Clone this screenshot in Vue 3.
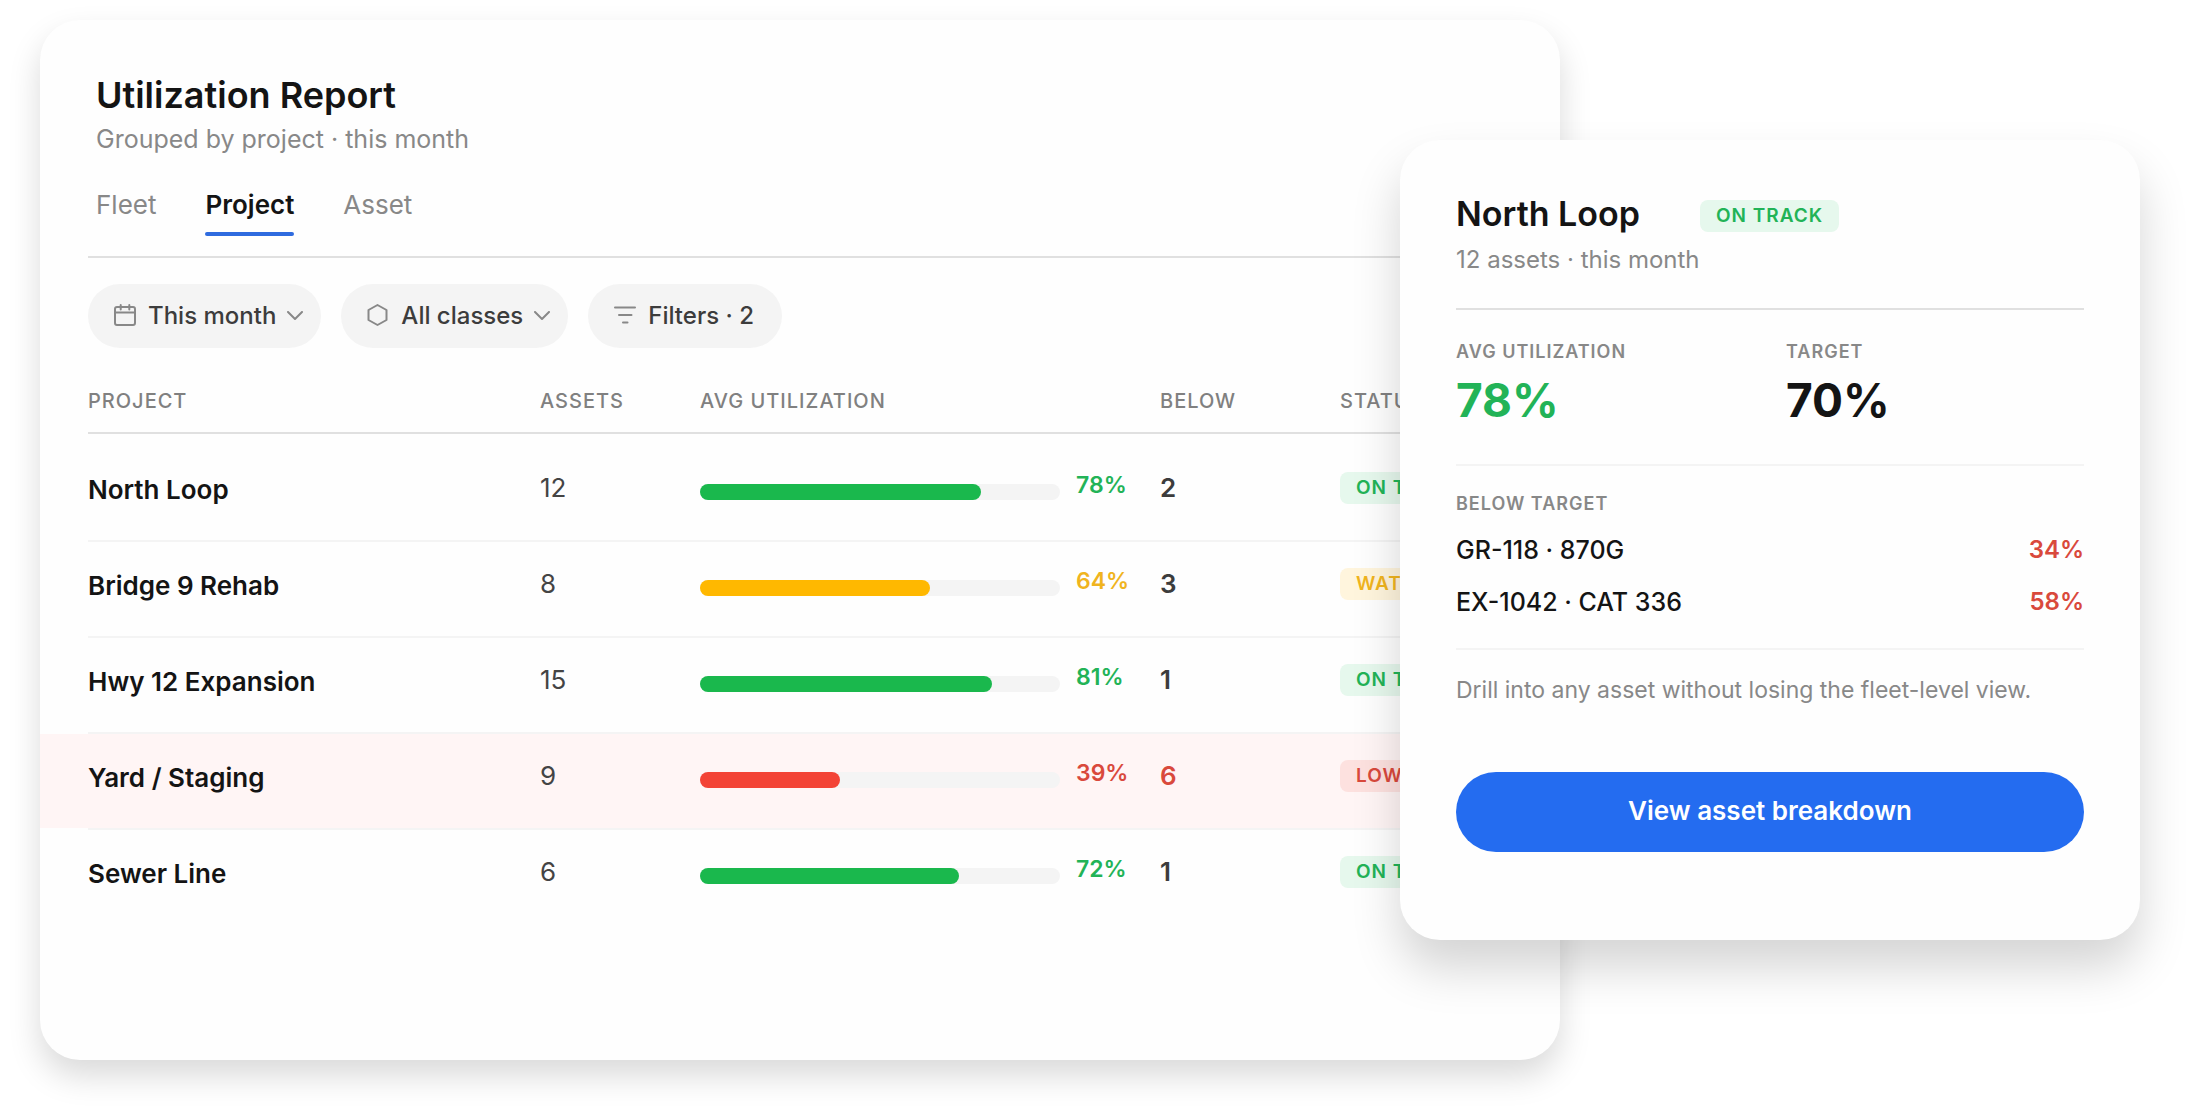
<script setup>
import { ref } from 'vue'

const tabs = ['Fleet', 'Project', 'Asset']
const activeTab = ref('Project')

const projects = [
  { name: 'North Loop', assets: 12, pct: 78, below: 2, status: 'On track', tone: 'good' },
  { name: 'Bridge 9 Rehab', assets: 8, pct: 64, below: 3, status: 'Watch', tone: 'warn' },
  { name: 'Hwy 12 Expansion', assets: 15, pct: 81, below: 1, status: 'On track', tone: 'good' },
  { name: 'Yard / Staging', assets: 9, pct: 39, below: 6, status: 'Low', tone: 'bad' },
  { name: 'Sewer Line', assets: 6, pct: 72, below: 1, status: 'On track', tone: 'good' }
]

const belowTarget = [
  { name: 'GR-118 · 870G', pct: 34 },
  { name: 'EX-1042 · CAT 336', pct: 58 }
]
</script>

<template>
  <main class="stage">
    <section class="card report">
      <header class="report-head">
        <h1>Utilization Report</h1>
        <p class="sub">Grouped by project · this month</p>
        <div class="tabs" role="tablist">
          <button
            v-for="tab in tabs"
            :key="tab"
            type="button"
            role="tab"
            class="tab"
            :class="{ active: tab === activeTab }"
            :aria-selected="tab === activeTab"
            @click="activeTab = tab"
          >{{ tab }}</button>
        </div>
      </header>

      <div class="chips">
        <button type="button" class="chip">
          <svg class="icon" viewBox="0 0 24 24" aria-hidden="true">
            <rect x="2" y="3" width="20" height="18" rx="2" />
            <path d="M2 8.500H22M7.700 1V5.500M16.300 1V5.500" />
          </svg>
          <span>This month</span>
          <svg class="chevron" viewBox="0 0 16 10" aria-hidden="true"><path d="M1 1L8 8L15 1" /></svg>
        </button>
        <button type="button" class="chip">
          <svg class="icon" viewBox="0 0 24 24" aria-hidden="true">
            <path d="M11.500 1L20.500 6V16L11.500 21L2.500 16V6Z" />
          </svg>
          <span>All classes</span>
          <svg class="chevron" viewBox="0 0 16 10" aria-hidden="true"><path d="M1 1L8 8L15 1" /></svg>
        </button>
        <button type="button" class="chip">
          <svg class="icon" viewBox="0 0 24 24" aria-hidden="true">
            <path d="M2 3.500H22M6 11H18.500M10 18.500H14.500" />
          </svg>
          <span>Filters · 2</span>
        </button>
      </div>

      <table class="table">
        <colgroup>
          <col class="c-project"><col class="c-assets"><col class="c-util"><col class="c-below"><col class="c-status">
        </colgroup>
        <thead>
          <tr>
            <th scope="col">Project</th>
            <th scope="col">Assets</th>
            <th scope="col">Avg utilization</th>
            <th scope="col">Below</th>
            <th scope="col">Status</th>
          </tr>
        </thead>
        <tbody>
          <tr v-for="p in projects" :key="p.name" :class="[p.tone]">
            <td class="name">{{ p.name }}</td>
            <td class="assets">{{ p.assets }}</td>
            <td class="util">
              <div class="meter">
                <div class="track"><div class="fill" :style="{ width: p.pct + '%' }"></div></div>
                <span class="pct">{{ p.pct }}%</span>
              </div>
            </td>
            <td class="below">{{ p.below }}</td>
            <td class="status"><span class="badge" :class="p.tone">{{ p.status }}</span></td>
          </tr>
        </tbody>
      </table>
    </section>

    <aside class="card detail">
      <header class="detail-head">
        <div class="detail-title">
          <h2>North Loop</h2>
          <span class="badge good">On track</span>
        </div>
        <p class="sub">12 assets · this month</p>
      </header>

      <dl class="stats">
        <div>
          <dt class="label">Avg utilization</dt>
          <dd class="good">78%</dd>
        </div>
        <div>
          <dt class="label">Target</dt>
          <dd>70%</dd>
        </div>
      </dl>

      <section class="shortfall">
        <h3 class="label">Below target</h3>
        <ul>
          <li v-for="a in belowTarget" :key="a.name">
            <span>{{ a.name }}</span><strong>{{ a.pct }}%</strong>
          </li>
        </ul>
      </section>

      <p class="hint">Drill into any asset without losing the fleet-level view.</p>
      <button type="button" class="cta">View asset breakdown</button>
    </aside>
  </main>
</template>

<style>
body {
  background: #fff;
}
</style>

<style scoped>
.stage {
  display: flex;
  align-items: flex-start;
  box-sizing: border-box;
  padding: 20px 55px 59px 40px;
  overflow: hidden;
  font-family: Inter, "Liberation Sans", sans-serif;
  font-size: 26px;
  line-height: 32px;
  color: #141414;
}

h1, h2, h3, p, ul, dl, dd {
  margin: 0;
  padding: 0;
}

button {
  border: 0;
  padding: 0;
  background: none;
  font: inherit;
  color: inherit;
  cursor: pointer;
}

.card {
  box-sizing: border-box;
  background: #fefefe;
  border-radius: 40px;
}

.report {
  flex: 1 1 0;
  min-width: 0;
  padding: 52px 48px 134px;
  box-shadow: 0 16px 32px rgba(0, 0, 0, 0.15);
}

.report-head {
  padding: 0 8px 20px;
  border-bottom: 2px solid #e0e0e0;
}

h1 {
  font-size: 36px;
  line-height: 46px;
  font-weight: 600;
}

.sub {
  font-size: 24px;
  color: #888;
}

.report-head .sub {
  margin-top: 5px;
  font-size: 25px;
}

.tabs {
  display: flex;
  gap: 49px;
  margin-top: 34px;
}

.tab {
  position: relative;
  padding-bottom: 15px;
  color: #888;
}

.tab.active {
  font-weight: 600;
  color: #141414;
}

.tab.active::after {
  content: "";
  position: absolute;
  left: 0;
  right: 0;
  bottom: 0;
  height: 4px;
  border-radius: 2px;
  background: #2f6bdf;
}

.chips {
  display: flex;
  gap: 20px;
  margin-top: 26px;
}

.chip {
  display: flex;
  align-items: center;
  height: 64px;
  padding: 0 18px 0 25px;
  border-radius: 32px;
  background: #f4f4f4;
  font-size: 24px;
  font-weight: 500;
  color: #3c3c3c;
}

.chip:last-child {
  padding-right: 28px;
}

.icon {
  width: 24px;
  height: 24px;
  margin-right: 11px;
}

.chevron {
  width: 16px;
  height: 10px;
  margin-left: 11px;
}

.icon,
.chevron {
  fill: none;
  stroke: #888;
  stroke-width: 2;
  stroke-linecap: round;
  stroke-linejoin: round;
}

.table {
  width: 100%;
  margin-top: 41px;
  table-layout: fixed;
  border-spacing: 0;
}

.c-project { width: 452px; }
.c-assets { width: 160px; }
.c-util { width: 460px; }
.c-below { width: 180px; }

th {
  padding: 0 0 19px;
  border-bottom: 2px solid #e0e0e0;
  font-size: 20px;
  line-height: 24px;
  font-weight: 500;
  letter-spacing: 1px;
  text-align: left;
  text-transform: uppercase;
  color: #808080;
}

tbody::before {
  content: "";
  display: table-row;
  height: 12px;
}

td {
  height: 68px;
  padding: 26px 0 0;
  border-bottom: 2px solid #f4f4f4;
  background-clip: padding-box;
  vertical-align: top;
}

tbody tr:last-child td {
  border-bottom-color: transparent;
}

td.name {
  padding-top: 28px;
  height: 66px;
  font-weight: 600;
}

td.assets {
  color: #444;
}

td.util {
  padding-top: 23px;
  height: 71px;
}

td.below {
  font-weight: 600;
  color: #3c3c3c;
}

tr.bad td {
  position: relative;
  background-color: #fff5f5;
}

tr.bad td:first-child::before,
tr.bad td:last-child::before {
  content: "";
  position: absolute;
  top: 0;
  bottom: 0;
  width: 48px;
  background: #fff5f5;
}

tr.bad td:first-child::before { right: 100%; }
tr.bad td:last-child::before { left: 100%; }

tr.bad td.below {
  color: #d9493c;
}

.meter {
  display: flex;
  align-items: flex-start;
  gap: 16px;
}

.track {
  width: 360px;
  height: 16px;
  margin-top: 15px;
  border-radius: 8px;
  background: #f4f4f4;
}

.fill {
  height: 100%;
  border-radius: 8px;
}

.good .fill { background: #1ab84d; }
.warn .fill { background: #ffb800; }
.bad .fill { background: #f34336; }

.pct {
  font-size: 23px;
  font-weight: 600;
}

.good .pct { color: #22b357; }
.warn .pct { color: #f0b41e; }
.bad .pct { color: #d9493c; }

.badge {
  display: inline-block;
  padding: 0 16px;
  border-radius: 8px;
  font-size: 19px;
  font-weight: 600;
  letter-spacing: 1px;
  text-transform: uppercase;
  white-space: nowrap;
  vertical-align: top;
}

.badge.good { background: #e6f8ed; color: #22b357; }
.badge.warn { background: #fff5dd; color: #f0b41e; }
.badge.bad { background: #fde1df; color: #d9493c; }

.detail {
  position: relative;
  flex: 0 0 740px;
  margin: 120px 0 0 -160px;
  padding: 56px 56px 88px;
  box-shadow: 0 28px 48px rgba(0, 0, 0, 0.17);
}

.detail-head {
  padding-bottom: 32px;
  border-bottom: 2px solid #e0e0e0;
}

.detail-title {
  display: flex;
  align-items: flex-end;
  gap: 60px;
}

h2 {
  font-size: 34px;
  line-height: 36px;
  font-weight: 600;
}

.detail-head .sub {
  margin-top: 12px;
}

.stats {
  display: grid;
  grid-template-columns: 330px 1fr;
  padding: 30px 0 36px;
  border-bottom: 2px solid #f4f4f4;
}

.label {
  font-size: 18px;
  line-height: 24px;
  font-weight: 600;
  letter-spacing: 1px;
  text-transform: uppercase;
  color: #888;
}

dd {
  margin-top: 8px;
  font-size: 46px;
  line-height: 56px;
  font-weight: 700;
}

dd.good {
  color: #22b357;
}

.shortfall {
  padding: 26px 0 30px;
  border-bottom: 2px solid #f4f4f4;
}

ul {
  display: flex;
  flex-direction: column;
  gap: 20px;
  margin-top: 18px;
  list-style: none;
}

li {
  display: flex;
  justify-content: space-between;
  font-size: 25px;
  font-weight: 500;
}

li strong {
  font-size: 24px;
  font-weight: 600;
  color: #d9493c;
}

.hint {
  padding: 24px 0 66px;
  font-size: 23px;
  color: #888;
}

.cta {
  display: block;
  width: 100%;
  height: 80px;
  padding-bottom: 2px;
  border-radius: 40px;
  background: #246cf0;
  font-weight: 600;
  color: #fff;
}

@media (max-width: 1700px) {
  .stage {
    flex-direction: column;
  }

  .report {
    align-self: stretch;
    flex: none;
  }

  .detail {
    flex: none;
    align-self: flex-end;
    margin: -80px 0 0;
    width: min(740px, 100%);
  }
}
</style>
